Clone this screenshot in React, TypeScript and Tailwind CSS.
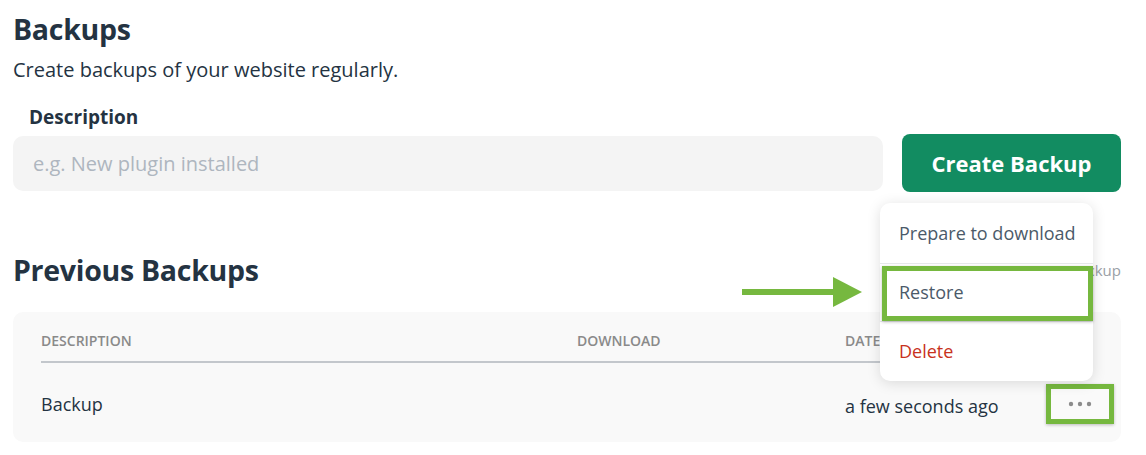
const HEADING = 'text-[28.5px] font-bold leading-[34px] tracking-[-0.01em] text-[#243342]'

function GreenArrow() {
  return (
    <svg width="124" height="32" viewBox="0 0 124 32" className="absolute left-[740px] top-[276px]">
      <rect x="2" y="13" width="92" height="6" fill="#76b83f" />
      <polygon points="93,1 122,16 93,31" fill="#76b83f" />
    </svg>
  )
}

function Dots() {
  return (
    <svg width="24" height="6" viewBox="0 0 24 6">
      <circle cx="3" cy="3" r="2.2" fill="#8c8c8c" />
      <circle cx="12" cy="3" r="2.2" fill="#8c8c8c" />
      <circle cx="21" cy="3" r="2.2" fill="#8c8c8c" />
    </svg>
  )
}

function ActionsMenu() {
  return (
    <div className="absolute left-[880px] top-[203px] w-[213px] rounded-[10px] bg-white shadow-[0_2px_14px_rgba(0,0,0,0.13)] text-[18px]">
      <div className="h-[61px] flex items-center pl-[19px] text-[#4b5a69] border-b border-[#e6e8ea]">Prepare to download</div>
      <div className="h-[58px] flex items-center pl-[19px] text-[#4b5a69] border-b border-[#e6e8ea]">Restore</div>
      <div className="h-[59px] flex items-center pl-[19px] text-[#c8321d]">Delete</div>
      {/* callout around Restore */}
      <div className="absolute left-[2px] top-[63px] w-[211px] h-[55px] border-[5px] border-[#76b83f] shadow-[0_1px_3px_rgba(0,0,0,0.25)]" />
    </div>
  )
}

export default function App() {
  return (
    <div className="relative w-[1146px] h-[455px] overflow-hidden bg-white pl-[13px] pr-[25px] pt-[12px] font-['Open_Sans',sans-serif]">
      <h1 className={HEADING}>Backups</h1>
      <p className="mt-[11px] text-[20px] leading-[26px] text-[#243342]">Create backups of your website regularly.</p>

      <label className="block mt-[22px] pl-[16px] text-[19px] font-bold leading-[24px] text-[#243342]">Description</label>
      <div className="mt-[5px] flex items-center gap-[19px]">
        <input
          placeholder="e.g. New plugin installed"
          className="flex-1 h-[55px] rounded-[10px] bg-[#f4f4f4] px-[20px] text-[20px] placeholder:text-[#aeb6bf] outline-none"
        />
        <button className="w-[219px] h-[58px] rounded-[8px] bg-[#128c61] text-white text-[22px] font-bold">Create Backup</button>
      </div>

      <div className="mt-[61px] flex items-center justify-between">
        <h2 className={HEADING}>Previous Backups</h2>
        <span className="text-[15px] text-[#9aa0a6]">Learn how to restore a backup</span>
      </div>

      <div className="mt-[25px] rounded-[10px] bg-[#f9f9f9] px-[28px]">
        <div className="grid grid-cols-[536px_268px_1fr] h-[51px] items-center pt-[8px] text-[14px] font-semibold text-[#8a8a8a] border-b-2 border-[#c3c7cc]">
          <span>DESCRIPTION</span>
          <span>DOWNLOAD</span>
          <span>DATE</span>
        </div>
        <div className="grid grid-cols-[536px_268px_1fr] h-[79px] items-center text-[18px] text-[#243342]">
          <span className="pt-[4px]">Backup</span>
          <span />
          <div className="flex items-center justify-between">
            <span className="pt-[8px]">a few seconds ago</span>
            <button className="mt-[2px] -mr-[21px] w-[68px] h-[40px] flex items-center justify-center border-[5px] border-[#76b83f] bg-[#fafafa] shadow-[0_1px_3px_rgba(0,0,0,0.25)]">
              <Dots />
            </button>
          </div>
        </div>
      </div>

      <GreenArrow />
      <ActionsMenu />
    </div>
  )
}
